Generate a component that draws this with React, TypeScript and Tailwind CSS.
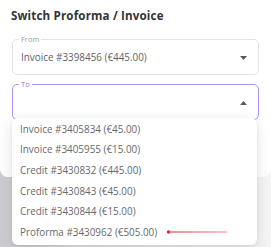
import React from 'react';

const invoices = [
  'Invoice #3405834 (€45.00)',
  'Invoice #3405955 (€15.00)',
  'Credit #3430832 (€445.00)',
  'Credit #3430843 (€45.00)',
  'Credit #3430844 (€15.00)',
  'Proforma #3430962 (€505.00)',
];

const Caret: React.FC<{ up?: boolean }> = ({ up }) => (
  <svg width="7" height="4" viewBox="0 0 7 4" className="shrink-0">
    <path d={up ? 'M0 4 L3.5 0 L7 4 Z' : 'M0 0 L7 0 L3.5 4 Z'} fill="#5b5b5f" />
  </svg>
);

const Field: React.FC<{ label: string; value?: string; active?: boolean }> = ({ label, value, active }) => (
  <div
    className={`relative h-[36px] rounded-[5px] border px-[8px] flex items-center justify-between ${
      active ? 'border-[#ab93f6]' : 'border-[#e3e3e6]'
    }`}
  >
    <span
      className={`absolute -top-[6px] left-[6px] bg-white px-[2px] text-[7.5px] leading-[10px] ${
        active ? 'text-[#8d70ef]' : 'text-[#9a9a9e]'
      }`}
    >
      {label}
    </span>
    <span className="text-[9.9px] text-[#626266] mt-[1px]">{value}</span>
    <span className="mr-[3px] mt-[1px]">
      <Caret up={active} />
    </span>
  </div>
);

export default function App() {
  return (
    <div
      className="relative w-[271px] h-[247px] overflow-hidden bg-[linear-gradient(90deg,#cbcbcf_0%,#e4e4e6_30%,#f1f1f1_70%,#f4f4f4_100%)]"
      style={{ fontFamily: '"Open Sans", "Liberation Sans", sans-serif' }}
    >
      <div className="h-[177px] bg-white rounded-b-[8px] px-[12px] pt-[8px]">
        <h2 className="text-[11.6px] font-bold text-[#333336] leading-[16px] tracking-[0.15px] -ml-[1px]">
          Switch Proforma / Invoice
        </h2>
        <div className="mt-[15px] flex flex-col gap-[9px]">
          <Field label="From" value="Invoice #3398456 (€445.00)" />
          <Field label="To" active />
        </div>
      </div>

      <div className="absolute left-[12px] top-[118px] w-[245px] h-[127px] bg-white rounded-[6px] shadow-[0_4px_14px_rgba(0,0,0,0.12),0_1px_3px_rgba(0,0,0,0.06)] pt-[1px]">
        {invoices.map((inv, i) => (
          <div key={inv} className="h-[20.6px] flex items-center pl-[8px] text-[9.9px] text-[#68686c]">
            <span className="whitespace-nowrap">{inv}</span>
            {i === invoices.length - 1 && (
              <svg width="62" height="6" viewBox="0 0 62 6" className="ml-[9px] shrink-0">
                <defs>
                  <linearGradient id="ln" gradientUnits="userSpaceOnUse" x1="0" x2="62" y1="3" y2="3">
                    <stop offset="0" stopColor="#e8434a" />
                    <stop offset="1" stopColor="#f39a9d" />
                  </linearGradient>
                </defs>
                <rect x="2" y="2.4" width="59" height="1.2" fill="url(#ln)" />
                <circle cx="2.5" cy="3" r="1.7" fill="#e0262f" />
              </svg>
            )}
          </div>
        ))}
      </div>
    </div>
  );
}
